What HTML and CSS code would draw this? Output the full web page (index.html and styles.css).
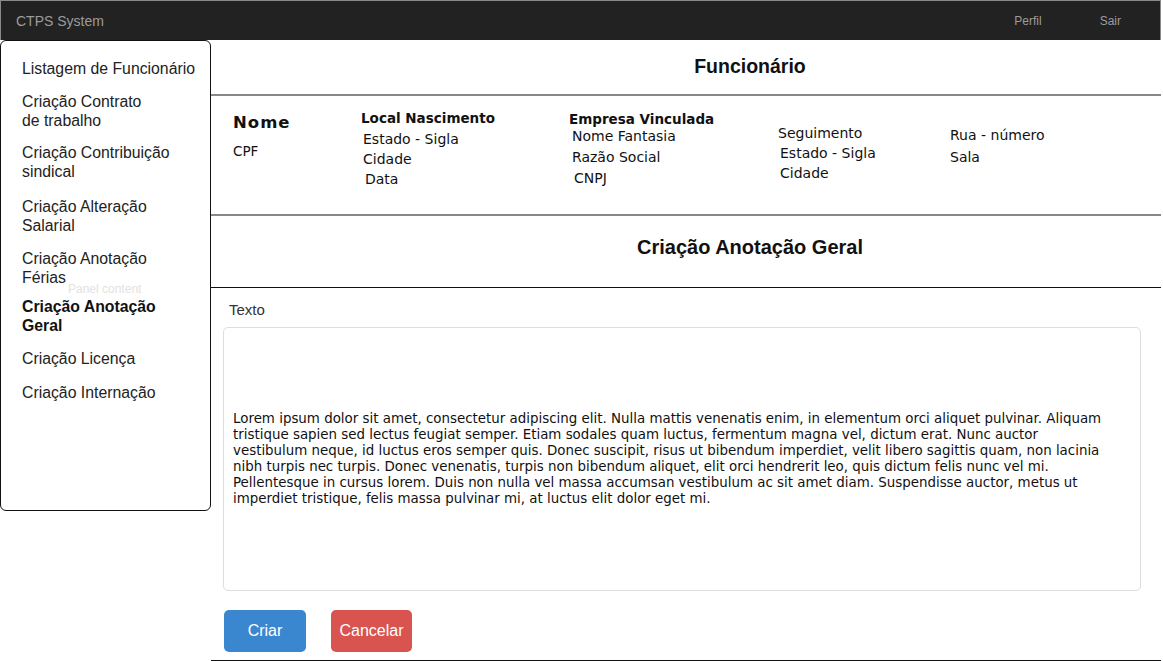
FILE: index.html
```html
<!DOCTYPE html>
<html lang="pt">
<head>
<meta charset="utf-8">
<title>CTPS System</title>
<link rel="stylesheet" href="styles.css">
</head>
<body>
<header class="topbar">
  <span class="brand">CTPS System</span>
  <nav class="topnav">
    <a class="topnav-link">Perfil</a>
    <a class="topnav-link">Sair</a>
  </nav>
</header>
<div class="layout">
  <aside class="sidebar">
    <ul class="menu">
      <li class="menu-item">Listagem de Funcionário</li>
      <li class="menu-item">Criação Contrato<br>de trabalho</li>
      <li class="menu-item">Criação Contribuição<br>sindical</li>
      <li class="menu-item">Criação Alteração<br>Salarial</li>
      <li class="menu-item">Criação Anotação<br>Férias</li>
      <li class="menu-item active">Criação Anotação<br>Geral</li>
      <li class="menu-item">Criação Licença</li>
      <li class="menu-item">Criação Internação</li>
    </ul>
    <span class="panel-note">Panel content</span>
  </aside>
  <main class="main">
    <section class="title-bar">
      <h1 class="title">Funcionário</h1>
    </section>
    <section class="info">
      <div class="col col-nome">
        <div class="nome">Nome</div>
        <div class="cpf">CPF</div>
      </div>
      <div class="col col-local">
        <div class="col-head">Local Nascimento</div>
        <div class="field">Estado - Sigla</div>
        <div class="field">Cidade</div>
        <div class="field shift">Data</div>
      </div>
      <div class="col col-empresa">
        <div class="col-head">Empresa Vinculada</div>
        <div class="field shift">Nome Fantasia</div>
        <div class="field shift">Razão Social</div>
        <div class="field shift2">CNPJ</div>
      </div>
      <div class="col col-seg">
        <div class="field">Seguimento</div>
        <div class="field shift">Estado - Sigla</div>
        <div class="field shift">Cidade</div>
      </div>
      <div class="col col-rua">
        <div class="field">Rua - número</div>
        <div class="field">Sala</div>
      </div>
    </section>
    <section class="title-bar second">
      <h2 class="title">Criação Anotação Geral</h2>
    </section>
    <form class="form">
      <label class="label">Texto</label>
      <div class="textbox">
        <p class="textbox-text">Lorem ipsum dolor sit amet, consectetur adipiscing elit. Nulla mattis venenatis enim, in elementum orci aliquet pulvinar. Aliquam<br>tristique sapien sed lectus feugiat semper. Etiam sodales quam luctus, fermentum magna vel, dictum erat. Nunc auctor<br>vestibulum neque, id luctus eros semper quis. Donec suscipit, risus ut bibendum imperdiet, velit libero sagittis quam, non lacinia<br>nibh turpis nec turpis. Donec venenatis, turpis non bibendum aliquet, elit orci hendrerit leo, quis dictum felis nunc vel mi.<br>Pellentesque in cursus lorem. Duis non nulla vel massa accumsan vestibulum ac sit amet diam. Suspendisse auctor, metus ut<br>imperdiet tristique, felis massa pulvinar mi, at luctus elit dolor eget mi.</p>
      </div>
      <div class="actions">
        <button type="button" class="btn btn-primary">Criar</button>
        <button type="button" class="btn btn-danger">Cancelar</button>
      </div>
    </form>
  </main>
</div>
</body>
</html>
```

FILE: styles.css
```css
* { box-sizing: border-box; }
html, body { margin: 0; padding: 0; background: #fff; }
body {
  width: 1163px;
  height: 661px;
  overflow: hidden;
  font-family: "Liberation Sans", Arial, sans-serif;
  color: #222;
}

.topbar {
  height: 40px;
  width: 1161px;
  background: #222;
  border: 1px solid #8a8a8a;
  border-bottom: none;
  display: flex;
  align-items: center;
  justify-content: space-between;
  padding: 0 0 0 15px;
}
.brand { color: #9c9c9c; font-size: 14px; }
.topnav { display: flex; align-items: center; }
.topnav-link { color: #9c9c9c; font-size: 12px; }
.topnav-link:first-child { margin-right: 58px; }
.topnav-link:last-child { margin-right: 39px; }

.layout { display: flex; align-items: flex-start; }

.sidebar {
  position: relative;
  width: 211px;
  height: 471px;
  border: 1px solid #111;
  border-radius: 6px;
  flex: none;
  padding: 18px 0 0 21px;
}
.menu { list-style: none; margin: 0; padding: 0; }
.menu-item {
  font-size: 15.8px;
  line-height: 19px;
  color: #222;
  margin-bottom: 14px;
}
.menu-item:nth-child(2) { margin-bottom: 13px; }
.menu-item:nth-child(3) { margin-bottom: 16px; }
.menu-item:nth-child(5) { margin-bottom: 10px; }
.menu-item:nth-child(7) { margin-bottom: 15px; }
.menu-item.active { font-weight: bold; color: #111; }
.panel-note {
  position: absolute;
  left: 67px;
  top: 241px;
  font-size: 12px;
  color: #e2e2e2;
}

.main {
  width: 950px;
  flex: none;
}

.title-bar {
  height: 56px;
  border-bottom: 2px solid #888;
  display: flex;
  align-items: center;
  justify-content: center;
  padding-left: 128px;
  padding-bottom: 2px;
}
.title {
  margin: 0;
  font-size: 19.5px;
  font-weight: bold;
  color: #111;
}
.title-bar.second {
  height: 72px;
  border-bottom: 1px solid #111;
  padding-bottom: 9px;
}
.title-bar.second .title { font-size: 20px; }

.info {
  height: 120px;
  border-bottom: 2px solid #888;
  display: flex;
  align-items: flex-start;
  padding-left: 22px;
  font-family: "DejaVu Sans", Verdana, sans-serif;
  font-size: 14px;
  color: #111;
}
.col { flex: none; }
.col-nome { width: 128px; padding-top: 17px; }
.col-local { width: 208px; padding-top: 14px; }
.col-empresa { width: 209px; padding-top: 15px; }
.col-seg { width: 172px; padding-top: 27px; }
.col-rua { padding-top: 28px; }
.nome { font-size: 16.5px; font-weight: bold; letter-spacing: 1px; line-height: 20px; }
.cpf { font-size: 13.5px; line-height: 20px; margin-top: 8px; }
.col-head { font-size: 13.5px; font-weight: bold; line-height: 16px; }
.field { line-height: 20px; }
.col-local .field { margin-left: 2px; }
.col-local .field:nth-child(2) { margin-top: 3px; }
.col-empresa .field { line-height: 21px; margin-left: 3px; }
.col-empresa .field:nth-child(2) { margin-top: -1px; }
.col-rua .field { line-height: 22px; }
.shift { margin-left: 4px; }
.col-local .shift { margin-left: 4px; }
.col-seg .shift { margin-left: 2px; }
.col-empresa .shift2 { margin-left: 5px; }

.form {
  padding: 14px 20px 8px 12px;
  border-bottom: 1px solid #111;
}
.label {
  display: block;
  margin-left: 6px;
  font-size: 15px;
  line-height: 16px;
  color: #333;
}
.textbox {
  margin-top: 9px;
  height: 264px;
  border: 1px solid #ddd;
  border-radius: 5px;
  display: flex;
  align-items: center;
  padding: 0 2px 0 9px;
}
.textbox-text {
  margin: 0;
  font-family: "DejaVu Sans", Verdana, sans-serif;
  font-size: 13.4px;
  line-height: 16px;
  color: #111;
  white-space: nowrap;
}
.actions {
  display: flex;
  gap: 25px;
  margin-top: 19px;
  padding-left: 1px;
}
.btn {
  height: 42px;
  border: none;
  border-radius: 5px;
  color: #fff;
  font-family: "Liberation Sans", Arial, sans-serif;
  font-size: 16px;
  padding: 0;
}
.btn-primary { width: 82px; background: #3b87cf; }
.btn-danger { width: 81px; background: #d9534f; }
```
